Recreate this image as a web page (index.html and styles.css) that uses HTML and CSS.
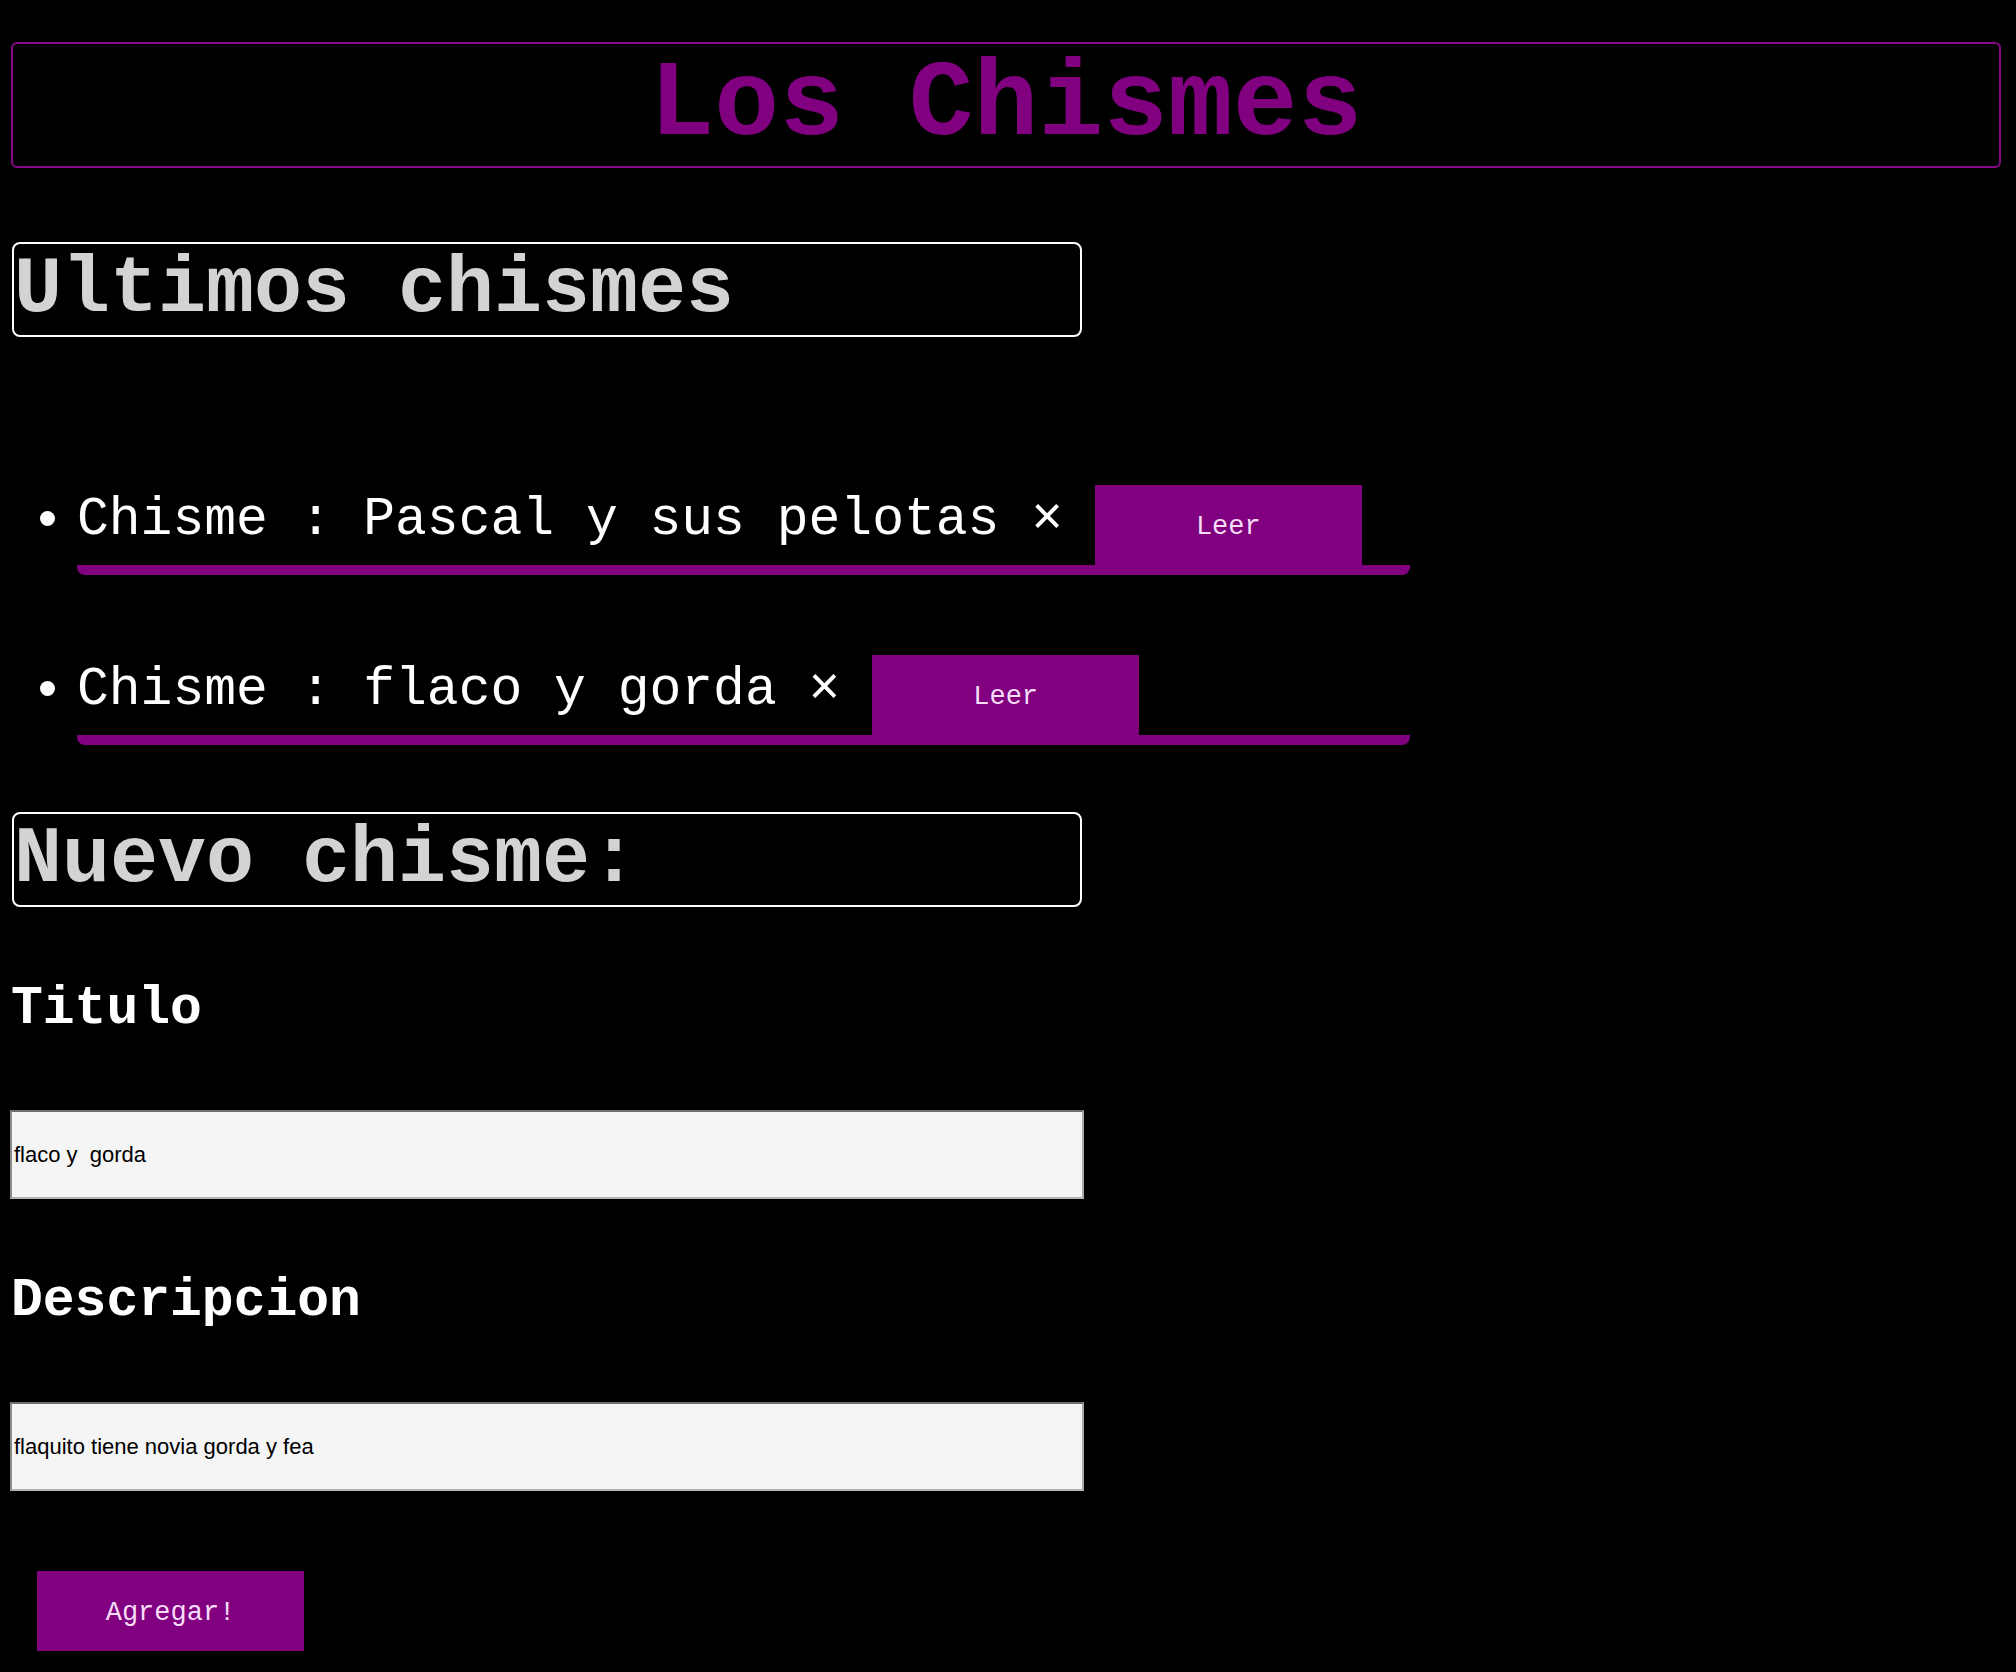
FILE: index.html
```html
<!DOCTYPE html>
<html lang="es">
<head>
<meta charset="utf-8">
<title>Los Chismes</title>
<link rel="stylesheet" href="styles.css">
</head>
<body>
<div class="page">
  <header class="banner">
    <h1 class="banner-title">Los Chismes</h1>
  </header>

  <h2 class="box-title">Ultimos chismes</h2>

  <ul class="gossip-list">
    <li class="gossip"><span class="gossip-text">Chisme : Pascal y sus pelotas ×</span> <button class="btn" type="button">Leer</button></li>
    <li class="gossip"><span class="gossip-text">Chisme : flaco y gorda ×</span> <button class="btn" type="button">Leer</button></li>
  </ul>

  <h2 class="box-title box-title-form">Nuevo chisme:</h2>

  <form class="form">
    <label class="field-label" for="titulo">Titulo</label>
    <input class="field" id="titulo" type="text" value="flaco y  gorda">
    <label class="field-label field-label-desc" for="descripcion">Descripcion</label>
    <input class="field" id="descripcion" type="text" value="flaquito tiene novia gorda y fea">
    <button class="btn btn-add" type="button">Agregar!</button>
  </form>
</div>
</body>
</html>
```

FILE: styles.css
```css
html, body {
  margin: 0;
  background: #000;
}

body {
  font-family: "Liberation Mono", "DejaVu Sans Mono", monospace;
  color: #fff;
}

.page {
  padding: 42px 15px 20px 11px;
}

.banner {
  border: 2px solid #850a85;
  border-radius: 6px;
}

.banner-title {
  margin: 0;
  font-size: 108px;
  line-height: 122px;
  font-weight: bold;
  color: #800080;
  text-align: center;
}

.box-title {
  box-sizing: border-box;
  width: 1070px;
  margin: 74px 0 0 1px;
  border: 2px solid #fff;
  border-radius: 8px;
  font-size: 80px;
  line-height: 91px;
  font-weight: bold;
  color: #d3d3d3;
}

.box-title-form {
  margin-top: 67px;
}

.gossip-list {
  list-style: none;
  margin: 148px 0 0;
  padding: 0 0 0 66px;
}

.gossip {
  position: relative;
  width: 1333px;
  border-bottom: 10px solid #800080;
  border-radius: 0 0 8px 8px;
  font-size: 53px;
  line-height: 60px;
  color: #fff;
  white-space: nowrap;
}

.gossip::before {
  content: "";
  position: absolute;
  left: -37px;
  top: 26px;
  width: 15px;
  height: 15px;
  border-radius: 50%;
  background: #fff;
}

.gossip + .gossip {
  margin-top: 80px;
}

.btn {
  box-sizing: border-box;
  width: 267px;
  height: 80px;
  padding: 4px 0 0;
  border: none;
  border-radius: 0;
  background: #800080;
  color: #f6dcf6;
  font-family: "Liberation Mono", "DejaVu Sans Mono", monospace;
  font-size: 27px;
  line-height: 30px;
  vertical-align: baseline;
}

.form {
  display: flex;
  flex-direction: column;
  align-items: flex-start;
}

.field-label {
  display: block;
  margin-top: 72px;
  font-size: 53px;
  line-height: 60px;
  font-weight: bold;
  color: #fff;
}

.field {
  box-sizing: border-box;
  width: 1074px;
  height: 89px;
  margin: 71px 0 0 -1px;
  padding: 0 2px;
  border: 2px solid;
  border-color: #6e6e6e #a8a8a8 #b4b4b4 #8a8a8a;
  background: #f5f5f5;
  color: #000;
  font-family: "Liberation Sans", Arial, sans-serif;
  font-size: 22px;
}

.btn-add {
  margin: 80px 0 0 26px;
}
```
